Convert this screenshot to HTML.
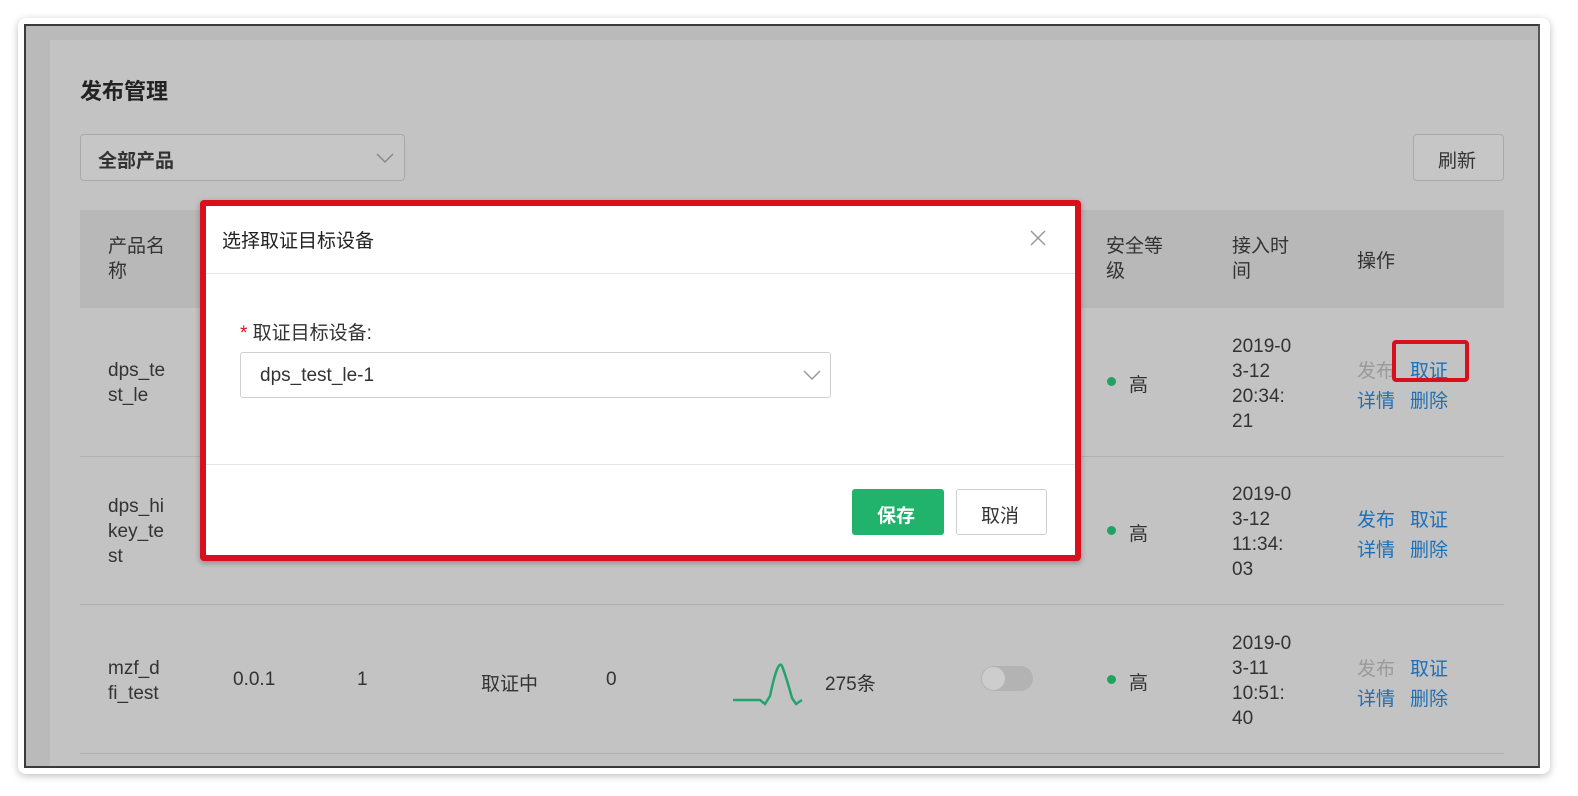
<!DOCTYPE html>
<html><head><meta charset="utf-8"><style>
*{margin:0;padding:0;box-sizing:border-box}
body{width:1578px;height:796px;background:#fff;position:relative;overflow:hidden;font-family:"Liberation Sans","Noto Sans CJK SC",sans-serif;color:#333}
.a{position:absolute}
.frame{left:18px;top:18px;width:1532px;height:756px;border-radius:8px;box-shadow:0 2px 8px rgba(0,0,0,.25);background:#fff}
.inner{left:24px;top:24px;width:1516px;height:744px;background:#bababa;border:2px solid #3a3a3a;border-right-color:#555;overflow:hidden}
.panel{left:24px;top:14px;width:1500px;height:740px;background:#c3c3c3}
.t{font-size:19px;color:#333}
.lk{color:#1d6fb8;font-size:19px}
.gr{color:#9a9a9a;font-size:19px}
.sel{border:1px solid #a9a9a9;border-radius:4px;background:#c6c6c6}
</style></head><body>
<div class="a frame"></div>
<div class="a inner">
 <div class="a panel"></div>
</div>
<div class="a t" style="left:80px;top:74px;font-size:22px;font-weight:bold;color:#222">发布管理</div>
<div class="a sel" style="left:80px;top:134px;width:325px;height:47px"></div>
<div class="a t" style="left:98px;top:146px;font-weight:bold;color:#333">全部产品</div>
<svg class="a" style="left:375px;top:152px" width="20" height="12"><path d="M2 2 L10 10 L18 2" fill="none" stroke="#888" stroke-width="1.5"/></svg>
<div class="a sel" style="left:1413px;top:134px;width:91px;height:47px"></div>
<div class="a t" style="left:1438px;top:146px">刷新</div>
<!-- header -->
<div class="a" style="left:80px;top:210px;width:1424px;height:98px;background:#b8b8b8"></div>
<div class="a t" style="left:108px;top:234px;line-height:25px">产品名<br>称</div>
<div class="a t" style="left:1106px;top:234px;line-height:25px">安全等<br>级</div>
<div class="a t" style="left:1232px;top:234px;line-height:25px">接入时<br>间</div>
<div class="a t" style="left:1357px;top:246px">操作</div>
<div class="a" style="left:80px;top:456px;width:1424px;height:1px;background:#b0b0b0"></div>
<div class="a" style="left:80px;top:604px;width:1424px;height:1px;background:#b0b0b0"></div>
<div class="a" style="left:80px;top:753px;width:1424px;height:1px;background:#b0b0b0"></div>
<!-- rows -->
<div class="a t" style="left:108px;top:358px;line-height:25px">dps_te<br>st_le</div>
<div class="a t" style="left:108px;top:494px;line-height:25px">dps_hi<br>key_te<br>st</div>
<div class="a t" style="left:108px;top:656px;line-height:25px">mzf_d<br>fi_test</div>
<div class="a t" style="left:233px;top:669px">0.0.1</div>
<div class="a t" style="left:357px;top:669px">1</div>
<div class="a t" style="left:481px;top:669px">取证中</div>
<div class="a t" style="left:606px;top:669px">0</div>
<svg class="a" style="left:730px;top:658px" width="90" height="50"><path d="M3 42 L30 42 L35 46 L40 38 Q48 0 52 8 Q56 18 62 40 L66 46 L72 42" fill="none" stroke="#23a46e" stroke-width="2.5"/></svg>
<div class="a t" style="left:825px;top:669px">275条</div>
<div class="a" style="left:981px;top:666px;width:52px;height:25px;border-radius:13px;background:#b3b3b3"></div>
<div class="a" style="left:982px;top:667px;width:23px;height:23px;border-radius:50%;background:#cdcdcd"></div>
<!-- levels -->
<div class="a" style="left:1107px;top:377px;width:9px;height:9px;border-radius:50%;background:#1fa35f"></div>
<div class="a t" style="left:1129px;top:370px">高</div>
<div class="a" style="left:1107px;top:526px;width:9px;height:9px;border-radius:50%;background:#1fa35f"></div>
<div class="a t" style="left:1129px;top:519px">高</div>
<div class="a" style="left:1107px;top:675px;width:9px;height:9px;border-radius:50%;background:#1fa35f"></div>
<div class="a t" style="left:1129px;top:668px">高</div>
<div class="a t" style="left:1232px;top:334px;line-height:25px">2019-0<br>3-12<br>20:34:<br>21</div>
<div class="a t" style="left:1232px;top:482px;line-height:25px">2019-0<br>3-12<br>11:34:<br>03</div>
<div class="a t" style="left:1232px;top:631px;line-height:25px">2019-0<br>3-11<br>10:51:<br>40</div>
<div class="a gr" style="left:1357px;top:356px">发布</div>
<div class="a lk" style="left:1410px;top:356px">取证</div>
<div class="a" style="left:1392px;top:340px;width:77px;height:42px;border:4px solid #d8101e;border-radius:4px"></div>
<div class="a lk" style="left:1357px;top:386px">详情</div><div class="a lk" style="left:1410px;top:386px">删除</div>
<div class="a lk" style="left:1357px;top:505px">发布</div><div class="a lk" style="left:1410px;top:505px">取证</div>
<div class="a lk" style="left:1357px;top:535px">详情</div><div class="a lk" style="left:1410px;top:535px">删除</div>
<div class="a gr" style="left:1357px;top:654px">发布</div><div class="a lk" style="left:1410px;top:654px">取证</div>
<div class="a lk" style="left:1357px;top:684px">详情</div><div class="a lk" style="left:1410px;top:684px">删除</div>
<!-- dialog -->
<div class="a" style="left:200px;top:200px;width:881px;height:361px;border:6px solid #d8101e;border-radius:4px;background:#fff;box-shadow:0 2px 6px rgba(0,0,0,.3)"></div>
<div class="a t" style="left:222px;top:226px;color:#222">选择取证目标设备</div>
<svg class="a" style="left:1029px;top:229px" width="18" height="18"><path d="M2 2L16 16M16 2L2 16" stroke="#999" stroke-width="1.5"/></svg>
<div class="a" style="left:206px;top:273px;width:869px;height:1px;background:#e6e6e6"></div>
<div class="a t" style="left:240px;top:318px"><span style="color:#d8101e">*</span> 取证目标设备:</div>
<div class="a" style="left:240px;top:352px;width:591px;height:46px;border:1px solid #d0d0d0;border-radius:3px"></div>
<div class="a t" style="left:260px;top:365px">dps_test_le-1</div>
<svg class="a" style="left:802px;top:369px" width="20" height="12"><path d="M2 2 L10 10 L18 2" fill="none" stroke="#999" stroke-width="1.5"/></svg>
<div class="a" style="left:206px;top:464px;width:869px;height:1px;background:#e6e6e6"></div>
<div class="a" style="left:852px;top:489px;width:92px;height:46px;background:#21b36b;border-radius:3px"></div>
<div class="a t" style="left:877px;top:501px;color:#fff;font-weight:bold">保存</div>
<div class="a" style="left:956px;top:489px;width:91px;height:46px;border:1px solid #cfcfcf;border-radius:3px"></div>
<div class="a t" style="left:981px;top:501px">取消</div>
</body></html>
